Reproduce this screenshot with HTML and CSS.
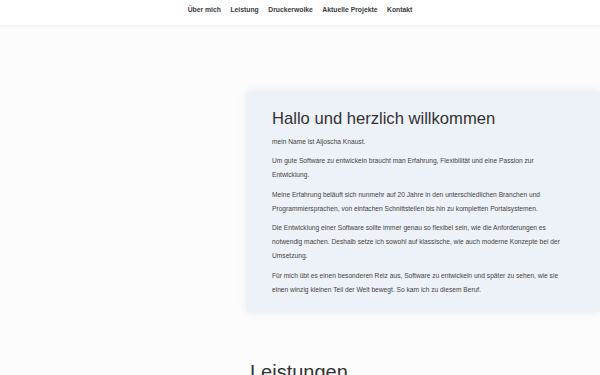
FILE: index.html
```html
<!DOCTYPE html>
<html lang="de">
<head>
  <meta charset="UTF-8" />
  <meta name="viewport" content="width=device-width, initial-scale=1.0"/>
  <title>Aljoscha Knaust</title>
  <link rel="stylesheet" href="styles.css">
</head>
<body>
  <header class="kopf">
    <nav class="menue">
      <a href="#ueber">Über mich</a>
      <a href="#leistung">Leistung</a>
      <a href="#druckerwolke">Druckerwolke</a>
      <a href="#projekte">Aktuelle Projekte</a>
      <a href="#kontakt">Kontakt</a>
    </nav>
  </header>

  <main class="inhalt">
    <section class="willkommen" id="ueber">
      <h1>Hallo und herzlich willkommen</h1>
      <p>mein Name ist Aljoscha Knaust.</p>
      <p>Um gute Software zu entwickeln braucht man Erfahrung, Flexibilität und eine Passion zur Entwicklung.</p>
      <p>Meine Erfahrung beläuft sich nunmehr auf 20 Jahre in den unterschiedlichen Branchen und Programmiersprachen, von einfachen Schnittstellen bis hin zu kompletten Portalsystemen.</p>
      <p>Die Entwicklung einer Software sollte immer genau so flexibel sein, wie die Anforderungen es notwendig machen. Deshalb setze ich sowohl auf klassische, wie auch moderne Konzepte bei der Umsetzung.</p>
      <p>Für mich übt es einen besonderen Reiz aus, Software zu entwickeln und später zu sehen, wie sie einen winzig kleinen Teil der Welt bewegt. So kam ich zu diesem Beruf.</p>
    </section>

    <section class="leistungen" id="leistung">
      <h2>Leistungen</h2>
    </section>
  </main>
</body>
</html>
```

FILE: styles.css
```css
:root {
  --farbe-text: #333;
  --farbe-fliesstext: #444;
  --farbe-karte: #edf1f8;
  --farbe-hintergrund: #fcfcfd;
}

* {
  margin: 0;
  padding: 0;
  box-sizing: border-box;
}

body {
  font-family: "Liberation Sans", Arial, Helvetica, sans-serif;
  background-color: var(--farbe-hintergrund);
  color: var(--farbe-text);
  overflow: hidden;
}

.kopf {
  background-color: white;
  height: 27px;
  border-bottom: 2px solid #f3f3f4;
}

.menue {
  display: flex;
  justify-content: center;
  gap: 9.5px;
  padding-top: 6px;
}

.menue a {
  color: #3a3a3a;
  font-size: 6.8px;
  font-weight: bold;
  text-decoration: none;
}

.inhalt {
  padding-top: 64px;
  padding-left: 247px;
}

.willkommen {
  background-color: var(--farbe-karte);
  padding: 18px 25px 15px 25px;
  box-shadow: 0 0 8px rgba(200, 210, 225, 0.45);
}

.willkommen h1 {
  font-size: 16.6px;
  font-weight: normal;
  color: #333;
  margin-bottom: 6px;
}

.willkommen p {
  font-size: 6.65px;
  line-height: 14.2px;
  color: var(--farbe-fliesstext);
  max-width: 295px;
  margin-bottom: 5px;
}

.willkommen p:last-child {
  margin-bottom: 0;
}

.leistungen {
  padding-top: 49px;
  padding-left: 3px;
}

.leistungen h2 {
  font-size: 20px;
  font-weight: normal;
  color: #333;
}
```
